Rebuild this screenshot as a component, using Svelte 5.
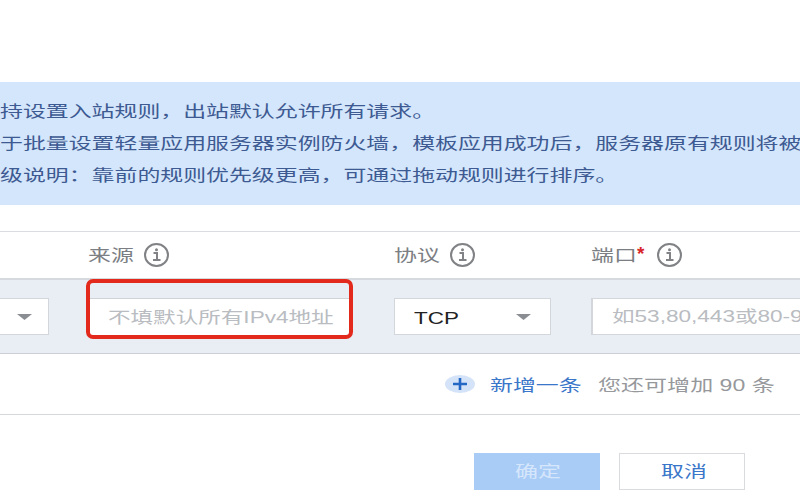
<script>
    const notices = [
        '持设置入站规则，出站默认允许所有请求。',
        '于批量设置轻量应用服务器实例防火墙，模板应用成功后，服务器原有规则将被',
        '级说明：靠前的规则优先级更高，可通过拖动规则进行排序。'
    ];
    const remaining = 90;
</script>

{#snippet info()}
    <svg class="info" viewBox="0 0 27 26" width="27" height="26">
        <ellipse cx="13.5" cy="13" rx="11.5" ry="11" fill="none" stroke="#808285" stroke-width="2" />
        <circle cx="13.5" cy="7.8" r="1.5" fill="#808285" />
        <path d="M10.5 11h3.5v6.5M10 18h7.5" fill="none" stroke="#808285" stroke-width="2" />
    </svg>
{/snippet}

{#snippet caret()}
    <svg class="caret" viewBox="0 0 15 6" width="15" height="6"><path d="M0 0h15L7.5 6z" fill="#8a8d92" /></svg>
{/snippet}

<main>
    <section class="notice">
        {#each notices as line}
            <p><span class="wide">{line}</span></p>
        {/each}
    </section>

    <div class="cols head">
        <div></div>
        <div class="label"><span class="wide w55">来源</span>{@render info()}</div>
        <div class="label"><span class="wide w55">协议</span>{@render info()}</div>
        <div class="label"><span class="wide w46">端口</span><b>*</b>{@render info()}</div>
    </div>

    <div class="cols row">
        <div class="select first">{@render caret()}</div>
        <div class="input source">
            <span class="wide ph">不填默认所有IPv4地址</span>
            <i class="mark"></i>
        </div>
        <div class="select proto"><span class="wide tcp">TCP</span>{@render caret()}</div>
        <div class="input port"><span class="wide ph">如53,80,443或80-9</span></div>
    </div>

    <div class="add">
        <span class="plus"><svg viewBox="0 0 14 12" width="14" height="12"><path d="M0 6h14M7 0v12" stroke="#2467c4" stroke-width="2.6" /></svg></span>
        <span class="wide link">新增一条</span>
        <span class="wide hint">您还可增加 {remaining} 条</span>
    </div>

    <div class="actions">
        <button class="ok"><span class="wide">确定</span></button>
        <button class="cancel"><span class="wide">取消</span></button>
    </div>
</main>

<style>
    :global(body) {
        background: #fff;
        overflow: hidden;
    }

    main {
        width: 800px;
        height: 500px;
        overflow: hidden;
        padding-top: 82px;
        box-sizing: border-box;
        font-family: "Liberation Sans", "Noto Sans CJK SC", sans-serif;
        font-size: 16px;
    }

    /* the screenshot is stretched sideways, the text has to follow */
    .wide {
        display: inline-block;
        transform: scaleX(1.431);
        transform-origin: left center;
        white-space: nowrap;
    }

    .notice {
        height: 123px;
        box-sizing: border-box;
        padding-top: 14px;
        margin-bottom: 26px;
        background: #d4e6fb;
        color: #3d5a92;
    }

    .notice p {
        margin: 0;
        height: 32px;
        line-height: 32px;
        white-space: nowrap;
    }

    .cols {
        display: grid;
        grid-template-columns: 88px 306px 197px 1fr;
    }

    .head {
        height: 46px;
        align-items: center;
        border-top: 1px solid #d9dce1;
        border-bottom: 2px solid #d6dade;
        color: #7b7e83;
    }

    .label {
        display: flex;
        align-items: center;
    }

    .w55 { width: 55px; padding-bottom: 3px; }
    .w46 { width: 46px; padding-bottom: 3px; }

    .label b {
        width: 19px;
        margin-top: -3px;
        color: #d9252a;
        font-size: 19px;
        line-height: 19px;
    }

    .info { flex: none; }

    .row {
        height: 74px;
        box-sizing: border-box;
        padding-top: 18px;
        background: #e9eef5;
        border-bottom: 1px solid #ccd0d6;
    }

    .select, .input {
        height: 37px;
        box-sizing: border-box;
        display: flex;
        align-items: center;
        background: #fff;
        border: 1px solid #d3d7dc;
    }

    .select {
        justify-content: space-between;
        padding-right: 19px;
    }

    .first {
        width: 49px;
        padding-right: 16px;
        justify-content: flex-end;
        border-left: 0;
    }

    .proto {
        width: 157px;
        padding-left: 19px;
    }

    .tcp {
        color: #222;
        font-size: 16.5px;
        transform: scaleX(1.36);
        padding-top: 3px;
    }

    .input {
        position: relative;
        color: #b9bcc1;
    }

    .source {
        width: 261px;
        margin-left: 2px;
        padding-left: 18px;
        border: 0;
        border-top: 1px solid #cfd3d9;
    }

    .port {
        width: 230px;
        padding-left: 19px;
        border-left-width: 2px;
    }

    .ph {
        padding-bottom: 3px;
        transform: scaleX(1.41);
    }

    .mark {
        position: absolute;
        left: -4px;
        top: -20px;
        width: 259px;
        height: 52px;
        border: 4px solid #e2291c;
        border-radius: 7px;
    }

    .add {
        height: 60px;
        display: flex;
        align-items: center;
        padding-left: 445px;
        border-bottom: 1px solid #d6d8dc;
        margin-bottom: 38px;
    }

    .plus {
        width: 30px;
        height: 18px;
        display: flex;
        align-items: center;
        justify-content: center;
        border-radius: 50%;
        background: #d4e3f7;
        margin-right: 15px;
    }

    .link {
        width: 108px;
        color: #3a76c9;
    }

    .hint {
        color: #96989c;
        transform: scaleX(1.44);
    }

    .actions {
        display: flex;
        gap: 19px;
        padding-left: 474px;
    }

    button {
        width: 126px;
        height: 37px;
        box-sizing: border-box;
        display: flex;
        align-items: center;
        justify-content: flex-start;
        font: inherit;
        padding: 0 0 3px 41px;
    }

    .ok {
        border: 0;
        background: #a9ccf7;
        color: #d6e6fb;
    }

    .cancel {
        background: #fff;
        border: 1px solid #d9dbde;
        color: #3a76c9;
    }
</style>
